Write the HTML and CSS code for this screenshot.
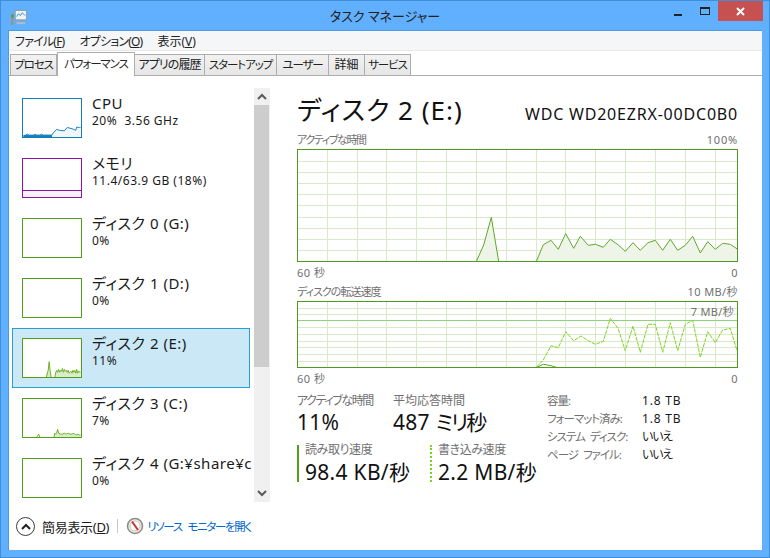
FILE: index.html
```html
<!DOCTYPE html>
<html lang="ja">
<head>
<meta charset="utf-8">
<title>タスク マネージャー</title>
<link rel="stylesheet" href="styles.css">
</head>
<body>
<div class="window">
  <header class="titlebar">
    <svg class="app-icon" width="17" height="17" viewBox="0 0 18 18">
      <rect x="1" y="5" width="3" height="12" fill="#8f9a96"/>
      <rect x="1.5" y="6" width="2" height="3" fill="#3f9a46"/>
      <rect x="5.5" y="1.5" width="12" height="10" fill="#eef3f6" stroke="#8e979c"/>
      <polyline points="7,8 9,5 11,7 13,4 16,7" fill="none" stroke="#2f8fd8"/>
      <rect x="10" y="12" width="3" height="2" fill="#9aa3a7"/>
      <rect x="7" y="14" width="9" height="2" fill="#b7bec1"/>
    </svg>
    <div class="title">タスク マネージャー</div>
    <div class="controls">
      <span class="ctl ctl-min"><i class="min-glyph"></i></span>
      <span class="ctl ctl-max"><i class="max-glyph"></i></span>
      <span class="ctl ctl-close">
        <svg width="9" height="9" viewBox="0 0 9 9"><path d="M1 1l7 7M8 1l-7 7" stroke="#fff" stroke-width="2"/></svg>
      </span>
    </div>
  </header>
  <div class="client">
    <nav class="menu">
      <span class="menu-item menu-kana">ファイル(<u>F</u>)</span>
      <span class="menu-item menu-kana">オプション(<u>O</u>)</span>
      <span class="menu-item">表示(<u>V</u>)</span>
    </nav>
    <div class="tabs">
      <span class="tab tab-w47 tight">プロセス</span>
      <span class="tab tab-active tight">パフォーマンス</span>
      <span class="tab tab-w70 semi">アプリの履歴</span>
      <span class="tab tab-w72 tight">スタートアップ</span>
      <span class="tab tab-w52 tight">ユーザー</span>
      <span class="tab tab-w36">詳細</span>
      <span class="tab tab-w46 tight">サービス</span>
    </div>
    <div class="body">
      <aside class="sidebar">
        <div class="list">
          <div class="item">
            <svg class="thumb thumb-cpu" viewBox="0 0 60 40">
              <polygon class="cpu-fill" points="0,39 2,38 4,37 6,38 11,38 12,37 14,38 17,38 19,37 21,38 30,38 31,36 35,32 38,33 43,33.5 46,30 50,31 53,32 55,33 56,29.5 59,30 60,30 60,40 0,40"/>
              <polyline class="cpu-line" points="0,39 2,38 4,37 6,38 11,38 12,37 14,38 17,38 19,37 21,38 30,38 31,36 35,32 38,33 43,33.5 46,30 50,31 53,32 55,33 56,29.5 59,30 60,30"/>
              <rect class="cpu-base" x="0" y="38" width="30" height="2"/>
            </svg>
            <div class="item-text"><div class="item-name">CPU</div><div class="item-sub">20%&nbsp; 3.56 GHz</div></div>
          </div>
          <div class="item">
            <div class="thumb thumb-mem"><div class="mem-used"></div></div>
            <div class="item-text"><div class="item-name">メモリ</div><div class="item-sub">11.4/63.9 GB (18%)</div></div>
          </div>
          <div class="item">
            <div class="thumb thumb-disk"></div>
            <div class="item-text"><div class="item-name">ディスク 0 (G:)</div><div class="item-sub">0%</div></div>
          </div>
          <div class="item">
            <div class="thumb thumb-disk"></div>
            <div class="item-text"><div class="item-name">ディスク 1 (D:)</div><div class="item-sub">0%</div></div>
          </div>
          <div class="item item-selected">
            <svg class="thumb thumb-disk thumb-white" viewBox="0 0 60 40">
              <polygon class="disk-fill" points="24,40 26,33 27,24 28,33 29,40"/>
              <polyline class="disk-line" points="24,40 26,33 27,24 28,33 29,40"/>
              <polygon class="disk-fill" points="33,40 34,35 35,33 36,35 37,32 38,35 39,33 40,34 41,31 42,35 43,32 44,34 45,33 46,35 47,33 48,36 49,35 50,34 51,36 52,33 53,35 54,33 55,36 56,32 57,36 58,34 60,35 60,40"/>
              <polyline class="disk-line" points="33,40 34,35 35,33 36,35 37,32 38,35 39,33 40,34 41,31 42,35 43,32 44,34 45,33 46,35 47,33 48,36 49,35 50,34 51,36 52,33 53,35 54,33 55,36 56,32 57,36 58,34 60,35"/>
            </svg>
            <div class="item-text"><div class="item-name">ディスク 2 (E:)</div><div class="item-sub">11%</div></div>
          </div>
          <div class="item">
            <svg class="thumb thumb-disk" viewBox="0 0 60 40">
              <polyline class="disk-line" points="14,40 16,37 17,40"/>
              <polygon class="disk-fill" points="32,40 33,36 34,37 35,35 36,32 37,36 39,37 41,37 43,36 45,37 47,36 49,37 51,37 53,36 55,38 57,37 59,38 60,38 60,40"/>
              <polyline class="disk-line" points="32,40 33,36 34,37 35,35 36,32 37,36 39,37 41,37 43,36 45,37 47,36 49,37 51,37 53,36 55,38 57,37 59,38 60,38"/>
            </svg>
            <div class="item-text"><div class="item-name">ディスク 3 (C:)</div><div class="item-sub">7%</div></div>
          </div>
          <div class="item">
            <div class="thumb thumb-disk"></div>
            <div class="item-text"><div class="item-name">ディスク 4 (G:¥share¥c</div><div class="item-sub">0%</div></div>
          </div>
        </div>
        <div class="scrollbar">
          <div class="sb-btn"><svg width="10" height="7" viewBox="0 0 10 7"><path d="M1 6l4-4 4 4" fill="none" stroke="#5a5a5a" stroke-width="2"/></svg></div>
          <div class="sb-thumb"></div>
          <div class="sb-rest"></div>
          <div class="sb-btn"><svg width="10" height="7" viewBox="0 0 10 7"><path d="M1 1l4 4 4-4" fill="none" stroke="#5a5a5a" stroke-width="2"/></svg></div>
        </div>
      </aside>
      <main class="main">
        <div class="head">
          <div class="head-title">ディスク 2 (E:)</div>
          <div class="head-model">WDC WD20EZRX-00DC0B0</div>
        </div>
        <div class="cap"><span class="cap-kana">アクティブな時間</span><span class="cap-num">100%</span></div>
        <svg class="chart chart-a" viewBox="0 0 441 113">
          <path class="grid" d="M30.5 0V113M60.5 0V113M89.5 0V113M119.5 0V113M149.5 0V113M179.5 0V113M209.5 0V113M239.5 0V113M268.5 0V113M298.5 0V113M328.5 0V113M358.5 0V113M388.5 0V113M418.5 0V113M0 12.5H441M0 23.5H441M0 34.5H441M0 45.5H441M0 56.5H441M0 68.5H441M0 79.5H441M0 90.5H441M0 101.5H441"/>
          <polygon class="area" points="179.3,112.5 186.7,96 194.3,68.3 201.7,112.5"/>
          <polyline class="line" points="179.3,112.5 186.7,96 194.3,68.3 201.7,112.5"/>
          <polygon class="area" points="239.3,112.5 246.3,95.7 254,91.3 261.3,100.3 268.7,84.7 276.7,99.3 283.3,87.3 291.3,96.3 298.3,95.3 306.3,98.3 313.3,90.3 321,95.7 328.3,102.3 336,93.7 343.3,101.3 351,93.7 358.3,91.3 365.7,101.3 373.3,90.3 380.7,101.3 388.3,96.3 395.7,87.3 403.3,104 410.7,92.7 418.3,100.3 425.7,94.3 433.3,95.3 440.3,100 440.3,112.5"/>
          <polyline class="line" points="239.3,112.5 246.3,95.7 254,91.3 261.3,100.3 268.7,84.7 276.7,99.3 283.3,87.3 291.3,96.3 298.3,95.3 306.3,98.3 313.3,90.3 321,95.7 328.3,102.3 336,93.7 343.3,101.3 351,93.7 358.3,91.3 365.7,101.3 373.3,90.3 380.7,101.3 388.3,96.3 395.7,87.3 403.3,104 410.7,92.7 418.3,100.3 425.7,94.3 433.3,95.3 440.3,100"/>
          <rect class="frame" x="0.5" y="0.5" width="440" height="112"/>
        </svg>
        <div class="axis"><span>60 秒</span><span>0</span></div>
        <div class="cap cap-2"><span class="cap-semi">ディスクの転送速度</span><span class="cap-num-2">10 MB/秒</span></div>
        <div class="chart-wrap">
          <svg class="chart chart-b" viewBox="0 0 441 67">
            <path class="grid" d="M30.5 0V67M60.5 0V67M89.5 0V67M119.5 0V67M149.5 0V67M179.5 0V67M209.5 0V67M239.5 0V67M268.5 0V67M298.5 0V67M328.5 0V67M358.5 0V67M388.5 0V67M418.5 0V67M0 7.5H441M0 13.5H441M0 26.5H441M0 33.5H441M0 40.5H441M0 46.5H441M0 53.5H441M0 60.5H441"/>
            <path class="ref" d="M0 19.5H441"/>
            <polyline class="line" points="239.3,66.5 246.3,63.3 254,64.7 259.7,66.5"/>
            <polyline class="line-dash" points="239.3,66.3 246.3,59 254,44.7 261.3,46.7 268.7,30.7 276.7,39.7 284,35 291.3,39.7 298.3,43.3 306.3,40.3 313.3,17.3 321,27.3 328.3,49.7 336,25 343.3,51.3 351,23.3 358.3,23.3 365.7,51.3 373.3,21.7 380.7,49.7 388.3,23.3 395.7,19.3 403.3,56.3 410.7,30.7 418.3,41.7 425.7,29 433.3,27.3 440.3,50.7"/>
            <rect class="frame" x="0.5" y="0.5" width="440" height="66"/>
          </svg>
          <span class="ref-label">7 MB/秒</span>
        </div>
        <div class="axis"><span>60 秒</span><span>0</span></div>
        <div class="stats">
          <div class="stats-left">
            <div class="stat-row">
              <div class="stat stat-active"><div class="stat-label label-kana">アクティブな時間</div><div class="stat-value">11%</div></div>
              <div class="stat"><div class="stat-label">平均応答時間</div><div class="stat-value">487 <span class="value-kana">ミリ</span>秒</div></div>
            </div>
            <div class="stat-row stat-row-2">
              <div class="stat stat-read"><div class="stat-label">読み取り速度</div><div class="stat-value">98.4 KB/秒</div></div>
              <div class="stat stat-write"><div class="stat-label">書き込み速度</div><div class="stat-value">2.2 MB/秒</div></div>
            </div>
          </div>
          <dl class="props">
            <dt>容量:</dt><dd>1.8 TB</dd>
            <dt>フォーマット済み:</dt><dd>1.8 TB</dd>
            <dt>システム ディスク:</dt><dd class="dd-kana">いいえ</dd>
            <dt>ページ ファイル:</dt><dd class="dd-kana">いいえ</dd>
          </dl>
        </div>
      </main>
    </div>
    <footer class="footer">
      <span class="circle-btn"><svg width="10" height="7" viewBox="0 0 10 7"><path d="M1 6l4-4 4 4" fill="none" stroke="#222" stroke-width="2"/></svg></span>
      <span class="fewer">簡易表示(<u>D</u>)</span>
      <span class="sep"></span>
      <svg class="monitor-icon" width="18" height="18" viewBox="0 0 18 18">
        <circle cx="9" cy="9" r="7.5" fill="#f1eeea" stroke="#8d8d86" stroke-width="1.6"/>
        <circle cx="9" cy="9" r="5" fill="#fff" stroke="#c9c6c0"/>
        <path d="M6 4.5L12 13" stroke="#c8342c" stroke-width="2"/>
      </svg>
      <span class="link">リソース モニターを開く</span>
    </footer>
  </div>
</div>
</body>
</html>
```

FILE: styles.css
```css
* { box-sizing: border-box; }
html, body { margin: 0; padding: 0; }
body {
  width: 770px;
  height: 558px;
  overflow: hidden;
  font-family: "Noto Sans", "Noto Sans CJK JP", sans-serif;
  font-feature-settings: "palt";
  color: #1a1a1a;
}
.window {
  width: 770px;
  height: 558px;
  background: #60b0ff;
  border: 1px solid #3f8fd6;
  display: flex;
  flex-direction: column;
}
.titlebar {
  height: 29px;
  flex: none;
  display: flex;
  position: relative;
  align-items: flex-start;
}
.app-icon { margin: 8px 0 0 9px; }
.title {
  position: absolute;
  left: 0;
  right: 0;
  top: 5px;
  text-align: center;
  font-size: 13px;
  line-height: 20px;
  color: #222;
}
.controls {
  margin-left: auto;
  margin-right: 6px;
  display: flex;
}
.ctl { height: 20px; display: flex; align-items: center; justify-content: center; }
.ctl-min { width: 28px; }
.ctl-max { width: 26px; }
.ctl-close { width: 45px; background: #c75050; }
.min-glyph { width: 8px; height: 2px; background: #222; margin-top: 7px; }
.max-glyph { width: 10px; height: 8px; border: 1px solid #222; border-top-width: 2px; }

.client {
  margin: 0 7px 7px;
  flex: 1;
  background: #fff;
  border: 1px solid #4b9be0;
  border-bottom: 0;
  border-right: 0;
  display: flex;
  flex-direction: column;
  min-height: 0;
}
.menu {
  height: 20px;
  flex: none;
  background: #f5f6f7;
  display: flex;
  gap: 15px;
  padding-left: 6px;
  font-size: 12px;
  line-height: 21px;
  color: #222;
  border-bottom: 1px solid #e8e8e8;
}
.menu-kana { letter-spacing: -0.8px; }
.tabs {
  height: 24px;
  flex: none;
  margin-top: 1px;
  padding-left: 1px;
  display: flex;
  align-items: flex-end;
  border-bottom: 1px solid #adadad;
  font-size: 12px;
  color: #222;
}
.tab {
  height: 21px;
  border: 1px solid #adadad;
  border-left-width: 0;
  border-bottom: 0;
  background: linear-gradient(#f2f2f2, #e6e6e6);
  text-align: center;
  line-height: 19px;
  white-space: nowrap;
}
.tight { font-size: 11.5px; letter-spacing: -1.1px; }
.semi { letter-spacing: -0.9px; }
.tab-w47 { width: 47px; border-left-width: 1px; }
.tab-w70 { width: 70px; }
.tab-w72 { width: 72px; }
.tab-w52 { width: 52px; }
.tab-w36 { width: 36px; }
.tab-w46 { width: 46px; }
.tab-active {
  width: 78px;
  height: 24px;
  margin-bottom: -1px;
  background: #fff;
  border-left-width: 1px;
  line-height: 21px;
}

.body { flex: 1; display: flex; min-height: 0; }
.sidebar {
  width: 263px;
  height: 426px;
  padding: 12px 0 0 3px;
  display: flex;
  overflow: hidden;
  flex: none;
}
.list { width: 242px; height: 414px; overflow: hidden; flex: none; }
.item {
  width: 238px;
  height: 60px;
  display: flex;
  padding: 9px 0 0 9px;
  border: 1px solid transparent;
}
.item-selected { background: #cbe8f6; border-color: #26a0da; }
.thumb {
  display: block;
  background: #fff;
  flex: none;
  border: 1px solid #4ea017;
  box-sizing: content-box;
  width: 58px;
  height: 38px;
}
svg.thumb { overflow: hidden; }
.thumb-cpu { border-color: #117dbb; }
.cpu-fill { fill: #f1f6fa; }
.cpu-line { fill: none; stroke: #117dbb; stroke-width: 1; }
.cpu-base { fill: #117dbb; }
.thumb-mem { border-color: #8b12ae; display: flex; flex-direction: column; justify-content: flex-end; }
.mem-used { height: 6px; background: #f4f2f4; border-top: 1px solid #8b12ae; box-sizing: content-box; }
.disk-fill { fill: #dcebcc; }
.disk-line { fill: none; stroke: #62b01e; stroke-width: 1; }
.item-text { margin-left: 10px; min-width: 0; flex: 1; }
.item-name { font-size: 15px; line-height: 19px; margin-top: -4px; white-space: nowrap; color: #1a1a1a; letter-spacing: 0.5px; }
.item-sub { font-size: 12px; line-height: 16px; white-space: nowrap; color: #1a1a1a; letter-spacing: 0.5px; }

.scrollbar { width: 16px; height: 414px; display: flex; flex-direction: column; background: #f0f0f0; flex: none; }
.sb-btn { height: 17px; display: flex; align-items: center; justify-content: center; flex: none; }
.sb-thumb { height: 262px; width: 15px; background: #cdcdcd; flex: none; }
.sb-rest { flex: 1; }

.main { width: 441px; flex: none; margin-left: 25px; }
.head {
  height: 56px;
  padding-top: 14px;
  display: flex;
  justify-content: space-between;
  align-items: baseline;
}
.head-title { font-size: 26px; line-height: 40px; color: #111; letter-spacing: 1px; }
.head-model { font-size: 16px; color: #111; letter-spacing: 0.8px; }
.cap {
  height: 17px;
  display: flex;
  justify-content: space-between;
  font-size: 11px;
  line-height: 16px;
  color: #707070;
}
.cap-kana { letter-spacing: -1.4px; }
.cap-semi { letter-spacing: -1px; }
.cap-num { letter-spacing: 0.8px; }
.cap-num-2 { letter-spacing: 0.4px; }
.cap-2 { height: 19px; line-height: 19px; }
.chart { display: block; width: 441px; }
.chart-a { height: 113px; }
.chart-b { height: 67px; }
.chart-wrap { position: relative; height: 67px; }
.ref-label {
  position: absolute;
  right: 4px;
  top: 3px;
  font-size: 11px;
  line-height: 16px;
  letter-spacing: 0.3px;
  color: #707070;
}
.grid { fill: none; stroke: #d9eacb; stroke-width: 1; }
.ref { fill: none; stroke: #8fd27a; stroke-width: 1; }
.area { fill: #eef5e8; }
.line { fill: none; stroke: #5fa82a; stroke-width: 1; }
.line-dash { fill: none; stroke: #7ed321; stroke-width: 1; stroke-dasharray: 4 1; }
.frame { fill: none; stroke: #4e9a1f; stroke-width: 1; }
.axis {
  height: 20px;
  display: flex;
  justify-content: space-between;
  font-size: 11px;
  line-height: 21px;
  letter-spacing: 0.5px;
  color: #707070;
}
.stats { display: flex; padding-top: 4px; }
.stats-left { width: 250px; flex: none; }
.stat-row { display: flex; }
.stat-row-2 { margin-top: 11px; }
.stat-active { width: 96px; }
.stat-label { font-size: 12px; line-height: 18px; color: #707070; }
.label-kana { letter-spacing: -1.4px; }
.stat-value { font-size: 21px; line-height: 24px; color: #111; white-space: nowrap; letter-spacing: 0.3px; }
.value-kana { letter-spacing: -2px; }
.stat-row-2 .stat { padding-left: 6px; height: 37px; }
.stat-row-2 .stat-label { line-height: 14px; margin-top: -2px; letter-spacing: -0.4px; }
.stat-row-2 .stat-value { margin-top: 3px; }
.stat-read { width: 133px; border-left: 2px solid #4ea017; }
.stat-write { border-left: 2px dotted #7ed321; }
.props {
  margin: 0;
  display: grid;
  grid-template-columns: 95px auto;
  grid-auto-rows: 18px;
  font-size: 12px;
  line-height: 18px;
}
.props dt { color: #707070; white-space: nowrap; font-size: 11.5px; letter-spacing: -1px; word-spacing: 3px; }
.props dd { margin: 0; color: #1a1a1a; letter-spacing: 0.8px; }
.props .dd-kana { letter-spacing: -1.2px; }

.footer {
  height: 24px;
  flex: none;
  display: flex;
  align-items: center;
  padding-left: 7px;
  margin-bottom: 12px;
}
.circle-btn {
  width: 19px;
  height: 19px;
  border: 1.5px solid #3a3a3a;
  border-radius: 50%;
  display: flex;
  align-items: center;
  justify-content: center;
  flex: none;
}
.fewer { font-size: 13px; margin-left: 7px; color: #1a1a1a; white-space: nowrap; letter-spacing: -0.3px; }
.sep { width: 1px; height: 14px; background: #c8c8c8; margin-left: 8px; }
.monitor-icon { margin-left: 8px; flex: none; }
.link { font-size: 11.5px; color: #0066cc; margin-left: 3px; white-space: nowrap; letter-spacing: -1.35px; word-spacing: 4px; }
```
